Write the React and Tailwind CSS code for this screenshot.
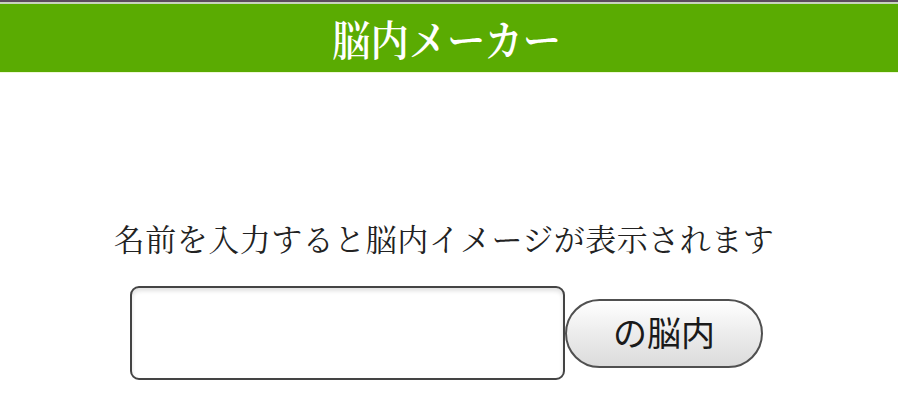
export default function App() {
  return (
    <div className="min-h-[405px] w-full bg-white font-['Noto_Sans_CJK_JP',sans-serif]">
      {/* top strip */}
      <div className="h-[2px] bg-[#5b4b5e]" />
      <div className="h-[2px] bg-[#c9d3bf]" />

      {/* header */}
      <header className="h-[69px] bg-[#5aab02] flex items-center justify-center border-b border-[#eef8d8]">
        <h1 className="text-[42px] leading-none text-white font-['Noto_Serif_CJK_JP','Noto_Sans_CJK_JP',serif] font-semibold scale-x-[0.91] mr-[4px]">
          脳内メーカー
        </h1>
      </header>

      <main className="pt-[145px] flex flex-col items-center">
        <p className="text-[31px] leading-[40px] text-[#222] font-['Noto_Serif_CJK_JP','Noto_Sans_CJK_JP',serif] tracking-[0.5px] pr-[10px]">
          名前を入力すると脳内イメージが表示されます
        </p>

        <form className="mt-[28px] mr-[5px] flex items-center" onSubmit={(e) => e.preventDefault()}>
          <input
            type="text"
            className="w-[435px] h-[94px] rounded-[9px] border-2 border-[#444] bg-white shadow-[inset_0_3px_4px_rgba(0,0,0,0.12)] px-3 text-[30px] outline-none"
          />
          <button
            type="submit"
            className="w-[198px] h-[69px] rounded-full border-2 border-[#505050] bg-gradient-to-b from-white via-[#ececec] to-[#dcdcdc] text-[34px] leading-none text-[#1a1a1a] flex items-center justify-center pb-[2px]"
          >
            の脳内
          </button>
        </form>
      </main>
    </div>
  );
}
